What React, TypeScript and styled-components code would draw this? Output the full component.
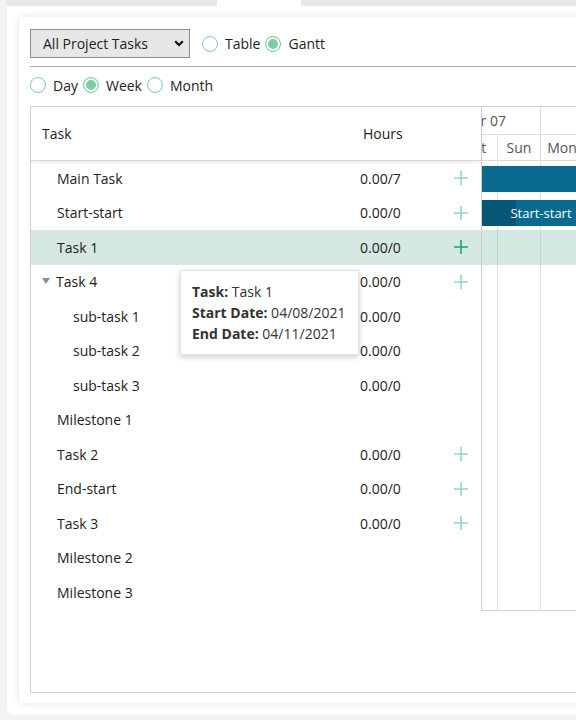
import React from "react";
import styled, { createGlobalStyle } from "styled-components";

interface TaskRow {
  name: string;
  level: number;
  hours?: string;
  add?: boolean;
  parent?: boolean;
  selected?: boolean;
}

interface BarData {
  row: number;
  start: number; // day index relative to first rendered day (Sat)
  days: number;
  progress?: number; // px
  label?: string;
}

const DAY_W = 43;

const rows: TaskRow[] = [
  { name: "Main Task", level: 0, hours: "0.00/7", add: true },
  { name: "Start-start", level: 0, hours: "0.00/0", add: true },
  { name: "Task 1", level: 0, hours: "0.00/0", add: true, selected: true },
  { name: "Task 4", level: 0, hours: "0.00/0", add: true, parent: true },
  { name: "sub-task 1", level: 1, hours: "0.00/0" },
  { name: "sub-task 2", level: 1, hours: "0.00/0" },
  { name: "sub-task 3", level: 1, hours: "0.00/0" },
  { name: "Milestone 1", level: 0 },
  { name: "Task 2", level: 0, hours: "0.00/0", add: true },
  { name: "End-start", level: 0, hours: "0.00/0", add: true },
  { name: "Task 3", level: 0, hours: "0.00/0", add: true },
  { name: "Milestone 2", level: 0 },
  { name: "Milestone 3", level: 0 },
];

// timeline is scrolled: first rendered day is Sat, partly hidden
const days = ["Sat", "Sun", "Mon", "Tue"];

const weeks = [
  { label: "Apr 07", days: 2 },
  { label: "", days: 2 },
];

const bars: BarData[] = [
  { row: 0, start: -2, days: 10 },
  { row: 1, start: -1, days: 6, progress: 104, label: "Start-start" },
];

const GlobalStyle = createGlobalStyle`
  html, body {
    margin: 0;
    padding: 0;
  }
  body {
    background: #f3f3f3;
    font-family: "Open Sans", "Noto Sans", sans-serif;
    font-size: 14px;
    color: #222;
  }
  * {
    box-sizing: border-box;
  }
`;

const PlusIcon = ({ dark }: { dark?: boolean }) => (
  <svg width="16" height="16" viewBox="0 0 16 16">
    <path
      d="M8 1v14M1 8h14"
      stroke={dark ? "#1ba47f" : "#8fd8c3"}
      strokeWidth="1.6"
      fill="none"
    />
  </svg>
);

const Radio = ({ label, checked }: { label: string; checked?: boolean }) => (
  <RadioOption>
    <RadioDot $checked={checked} />
    <span>{label}</span>
  </RadioOption>
);

const App: React.FC = () => {
  return (
    <>
      <GlobalStyle />
      <Page>
        <OuterCard>
          <TabStrip>
            <Tab $width="210px" />
            <Tab $width="84px" $active />
            <Tab />
          </TabStrip>

          <CardBody>
            <Panel>
              <Toolbar>
                <SelectBox>
                  <span>All Project Tasks</span>
                  <svg width="10" height="7" viewBox="0 0 10 7">
                    <path
                      d="M1.2 1.2L5 5L8.8 1.2"
                      stroke="#111"
                      strokeWidth="2.2"
                      fill="none"
                    />
                  </svg>
                </SelectBox>
                <RadioGroup>
                  <Radio label="Table" />
                  <Radio label="Gantt" checked />
                </RadioGroup>
              </Toolbar>

              <Divider />

              <ScaleBar>
                <RadioGroup>
                  <Radio label="Day" />
                  <Radio label="Week" checked />
                  <Radio label="Month" />
                </RadioGroup>
              </ScaleBar>

              <Gantt>
                {/* left grid */}
                <Grid>
                  <GridHeader>
                    <HeaderCell>Task</HeaderCell>
                    <HeaderCell $pad="33px">Hours</HeaderCell>
                    <HeaderCell />
                  </GridHeader>
                  {rows.map((r) => (
                    <GridRow key={r.name} $selected={r.selected}>
                      <NameCell $level={r.level}>
                        {r.parent ? <Caret /> : <CaretSpace />}
                        {r.name}
                      </NameCell>
                      <HoursCell>{r.hours}</HoursCell>
                      <AddCell>{r.add && <PlusIcon dark={r.selected} />}</AddCell>
                    </GridRow>
                  ))}
                </Grid>

                {/* timeline */}
                <Chart>
                  <Timeline style={{ width: days.length * DAY_W }}>
                    <ScaleRow $height="28px">
                      {weeks.map((w, i) => (
                        <WeekCell
                          key={i}
                          $first={i === 0}
                          style={{ width: w.days * DAY_W }}
                        >
                          {w.label}
                        </WeekCell>
                      ))}
                    </ScaleRow>
                    <ScaleRow $height="26px">
                      {days.map((d, i) => (
                        <DayCell key={i}>{d}</DayCell>
                      ))}
                    </ScaleRow>
                    <ChartBody>
                      {rows.map((r, i) => {
                        const bar = bars.find((b) => b.row === i);
                        return (
                          <BarRow key={r.name} $selected={r.selected}>
                            {bar && (
                              <Bar
                                style={{
                                  left: bar.start * DAY_W,
                                  width: bar.days * DAY_W,
                                }}
                              >
                                {bar.progress && (
                                  <BarProgress style={{ width: bar.progress }} />
                                )}
                                {bar.label && <BarLabel>{bar.label}</BarLabel>}
                              </Bar>
                            )}
                          </BarRow>
                        );
                      })}
                    </ChartBody>
                  </Timeline>
                </Chart>

                <Tooltip>
                  <TooltipLine>
                    <b>Task:</b> Task 1
                  </TooltipLine>
                  <TooltipLine>
                    <b>Start Date:</b> 04/08/2021
                  </TooltipLine>
                  <TooltipLine>
                    <b>End Date:</b> 04/11/2021
                  </TooltipLine>
                </Tooltip>
              </Gantt>
            </Panel>
          </CardBody>
        </OuterCard>
      </Page>
    </>
  );
};

const Page = styled.div`
  width: 576px;
  height: 720px;
  padding-left: 7px;
  overflow: hidden;
`;

const OuterCard = styled.div`
  width: 640px;
  height: 715px;
  background: #fff;
  border-radius: 0 0 6px 6px;
  display: flex;
  flex-direction: column;
`;

const TabStrip = styled.div`
  display: flex;
  height: 6px;
`;

const Tab = styled.div<{ $width?: string; $active?: boolean }>`
  flex: ${(p) => (p.$width ? `0 0 ${p.$width}` : "1")};
  background: ${(p) => (p.$active ? "#fff" : "#e8e8e8")};
`;

const CardBody = styled.div`
  flex: 1;
  display: flex;
  padding: 11px 0 12px 12px;
`;

const Panel = styled.div`
  flex: 1;
  display: flex;
  flex-direction: column;
  background: #fff;
  border-radius: 4px;
  box-shadow: 0 0 8px rgba(0, 0, 0, 0.12);
  padding: 12px 0 10px 11px;
`;

const Toolbar = styled.div`
  display: flex;
  align-items: center;
  gap: 12px;
  height: 29px;
`;

const SelectBox = styled.div`
  width: 160px;
  height: 29px;
  display: flex;
  align-items: center;
  justify-content: space-between;
  padding: 0 5px 0 12px;
  background: #e7e7e7;
  border: 1px solid #8c8c8c;
  color: #222;
  font-size: 14px;
`;

const RadioGroup = styled.div`
  display: flex;
  align-items: center;
  gap: 5px;
`;

const RadioOption = styled.label`
  display: inline-flex;
  align-items: center;
  gap: 7px;
  color: #222;
`;

const RadioDot = styled.span<{ $checked?: boolean }>`
  width: 16px;
  height: 16px;
  border-radius: 50%;
  border: 1.5px solid #7fcba4;
  background: ${(p) => (p.$checked ? "#7fcba4" : "#fff")};
  box-shadow: ${(p) => (p.$checked ? "inset 0 0 0 2px #fff" : "none")};
  flex-shrink: 0;
`;

const Divider = styled.div`
  margin-top: 8px;
  border-top: 1px solid #aaa;
`;

const ScaleBar = styled.div`
  margin-top: 10px;
  height: 16px;
  display: flex;
  align-items: center;
`;

const Gantt = styled.div`
  position: relative;
  flex: 1;
  display: flex;
  align-items: flex-start;
  margin-top: 13px;
  border: 1px solid #d0d0d0;
`;

const Grid = styled.div`
  width: 450px;
  flex-shrink: 0;
`;

const GridHeader = styled.div`
  position: relative;
  z-index: 1;
  display: grid;
  grid-template-columns: 1fr 110px 41px;
  align-items: center;
  height: 54px;
  border-bottom: 1px solid #d8d8d8;
  box-shadow: 0 2px 3px rgba(0, 0, 0, 0.07);
`;

const HeaderCell = styled.div<{ $pad?: string }>`
  padding-left: ${(p) => p.$pad || "11px"};
  color: #222;
`;

const GridRow = styled.div<{ $selected?: boolean }>`
  display: grid;
  grid-template-columns: 1fr 110px 41px;
  align-items: center;
  height: 34.5px;
  background: ${(p) => (p.$selected ? "#d5e8e1" : "transparent")};
`;

const NameCell = styled.div<{ $level: number }>`
  display: flex;
  align-items: center;
  padding-left: ${(p) => 11 + p.$level * 16}px;
  white-space: nowrap;
`;

const Caret = styled.span`
  width: 0;
  height: 0;
  margin: 0 6px 2px 0;
  border-left: 4.5px solid transparent;
  border-right: 4.5px solid transparent;
  border-top: 6px solid #8f8f8f;
`;

const CaretSpace = styled.span`
  width: 15px;
  flex-shrink: 0;
`;

const HoursCell = styled.div`
  padding-left: 30px;
`;

const AddCell = styled.div`
  display: flex;
  justify-content: center;
  align-items: center;
`;

const Chart = styled.div`
  flex: 1;
  min-width: 0;
  overflow: hidden;
  border-left: 1px solid #cfcfcf;
  border-bottom: 1px solid #d4d4d4;
`;

const Timeline = styled.div`
  margin-left: -27px;
`;

const ScaleRow = styled.div<{ $height: string }>`
  display: flex;
  height: ${(p) => p.$height};
  border-bottom: 1px solid #dcdcdc;
`;

const WeekCell = styled.div<{ $first?: boolean }>`
  flex-shrink: 0;
  display: flex;
  align-items: center;
  justify-content: ${(p) => (p.$first ? "flex-end" : "center")};
  padding-right: ${(p) => (p.$first ? "34px" : "0")};
  border-right: 1px solid #dcdcdc;
  overflow: hidden;
  white-space: nowrap;
  color: #555;
`;

const DayCell = styled.div`
  flex: 0 0 ${DAY_W}px;
  display: flex;
  align-items: center;
  justify-content: center;
  border-right: 1px solid #dcdcdc;
  color: #555;
`;

const ChartBody = styled.div`
  background: repeating-linear-gradient(
    to right,
    transparent 0,
    transparent ${DAY_W - 1}px,
    #e2e2e2 ${DAY_W - 1}px,
    #e2e2e2 ${DAY_W}px
  );
`;

const BarRow = styled.div<{ $selected?: boolean }>`
  position: relative;
  height: 34.5px;
  background: ${(p) =>
    p.$selected ? "rgba(110, 180, 158, 0.3)" : "transparent"};
`;

const Bar = styled.div`
  position: absolute;
  top: 4.5px;
  height: 26px;
  background: #086b8e;
  overflow: hidden;
`;

const BarProgress = styled.div`
  position: absolute;
  left: 0;
  top: 0;
  bottom: 0;
  background: #065675;
`;

const BarLabel = styled.div`
  position: relative;
  text-align: center;
  line-height: 26px;
  font-size: 13px;
  color: #fff;
  white-space: nowrap;
`;

const Tooltip = styled.div`
  position: absolute;
  left: 149px;
  top: 163px;
  z-index: 2;
  width: 179px;
  padding: 10px 11px;
  background: #fff;
  border: 1px solid #e2e2e2;
  box-shadow: 0 2px 6px rgba(0, 0, 0, 0.2);
  color: #333;
`;

const TooltipLine = styled.div`
  line-height: 21px;
  white-space: nowrap;

  b {
    font-weight: 700;
  }
`;

export default App;
